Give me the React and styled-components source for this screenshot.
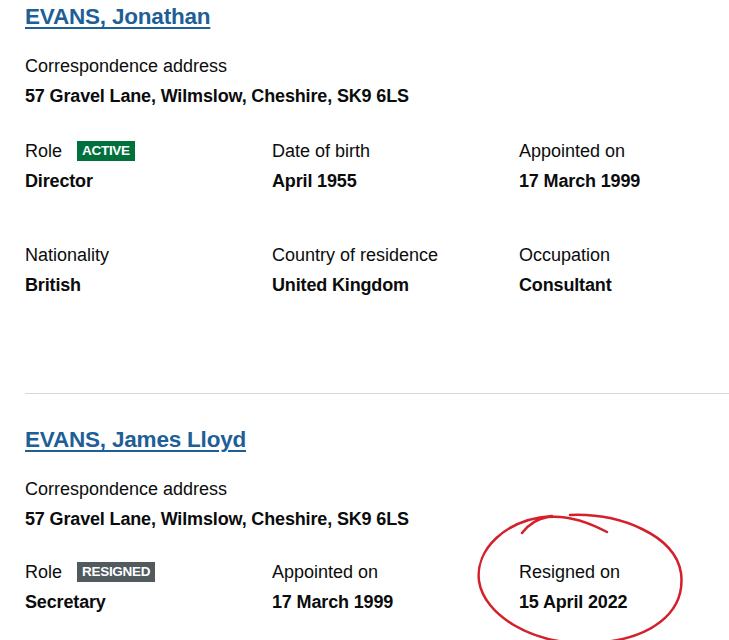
import React from "react";
import styled, { createGlobalStyle } from "styled-components";

const Global = createGlobalStyle`
  html, body { margin: 0; padding: 0; background: #fff; }
  body { font-family: "Liberation Sans", Arial, sans-serif; color: #0b0c0c; }
`;

const Page = styled.div`
  position: relative;
  padding: 0 0 0 25px;
  width: 729px;
  height: 640px;
  overflow: hidden;
  box-sizing: border-box;
`;

const Officer = styled.section`
  padding-bottom: ${(p) => p.$pb || 0}px;
`;

const Name = styled.a`
  display: block;
  font-size: 22.5px;
  font-weight: 700;
  letter-spacing: -0.2px;
  color: #1d5f96;
  text-decoration: underline;
  text-decoration-thickness: 2px;
  text-underline-offset: 3px;
  line-height: 30px;
  margin-top: ${(p) => p.$mt || 3}px;
`;

const Block = styled.dl`
  margin: ${(p) => p.$mt || 0}px 0 0 0;
`;

const Label = styled.dt`
  font-size: 18px;
  line-height: 20px;
  display: flex;
  align-items: center;
  gap: 15px;
`;

const Value = styled.dd`
  margin: 10px 0 0 0;
  font-size: 18px;
  font-weight: 700;
  letter-spacing: -0.15px;
  line-height: 20px;
`;

const Grid = styled.div`
  display: grid;
  grid-template-columns: 247px 247px 210px;
  margin-top: ${(p) => p.$mt || 0}px;
`;

const Tag = styled.span`
  display: inline-block;
  background: ${(p) => p.$bg};
  color: #fff;
  font-weight: 700;
  font-size: 13.5px;
  line-height: 20px;
  padding: 0 5px;
  letter-spacing: -0.3px;
`;

const Divider = styled.hr`
  border: 0;
  border-top: 1px solid #d5d7d8;
  margin: 0;
`;

const Scribble = styled.svg`
  position: absolute;
  left: 470px;
  top: 505px;
  pointer-events: none;
`;

const Item = ({ label, value, tag }) => (
  <Block>
    <Label>
      {label}
      {tag}
    </Label>
    <Value>{value}</Value>
  </Block>
);

export default function App() {
  return (
    <>
      <Global />
      <Page>
        <Officer $pb={98}>
          <Name href="#" $mt={2}>EVANS, Jonathan</Name>
          <Block $mt={24}>
            <Label>Correspondence address</Label>
            <Value>57 Gravel Lane, Wilmslow, Cheshire, SK9 6LS</Value>
          </Block>
          <Grid $mt={35}>
            <Item label="Role" value="Director" tag={<Tag $bg="#00703c">ACTIVE</Tag>} />
            <Item label="Date of birth" value="April 1955" />
            <Item label="Appointed on" value="17 March 1999" />
          </Grid>
          <Grid $mt={54}>
            <Item label="Nationality" value="British" />
            <Item label="Country of residence" value="United Kingdom" />
            <Item label="Occupation" value="Consultant" />
          </Grid>
        </Officer>
        <Divider />
        <Officer>
          <Name href="#" $mt={31}>EVANS, James Lloyd</Name>
          <Block $mt={24}>
            <Label>Correspondence address</Label>
            <Value>57 Gravel Lane, Wilmslow, Cheshire, SK9 6LS</Value>
          </Block>
          <Grid $mt={33}>
            <Item label="Role" value="Secretary" tag={<Tag $bg="#505a5f">RESIGNED</Tag>} />
            <Item label="Appointed on" value="17 March 1999" />
            <Item label="Resigned on" value="15 April 2022" />
          </Grid>
        </Officer>
        <Scribble width="230" height="140" viewBox="0 0 230 140">
          <path
            d="M52 28 C 58 20, 66 14, 78 12 C 98 10, 120 18, 137 27 M 100 10 C 150 8, 205 30, 211 68 C 216 108, 180 136, 120 138 C 62 140, 14 110, 9 76 C 5 45, 35 14, 82 11"
            fill="none"
            stroke="#d3202a"
            strokeWidth="2.5"
            strokeLinecap="round"
          />
        </Scribble>
      </Page>
    </>
  );
}
